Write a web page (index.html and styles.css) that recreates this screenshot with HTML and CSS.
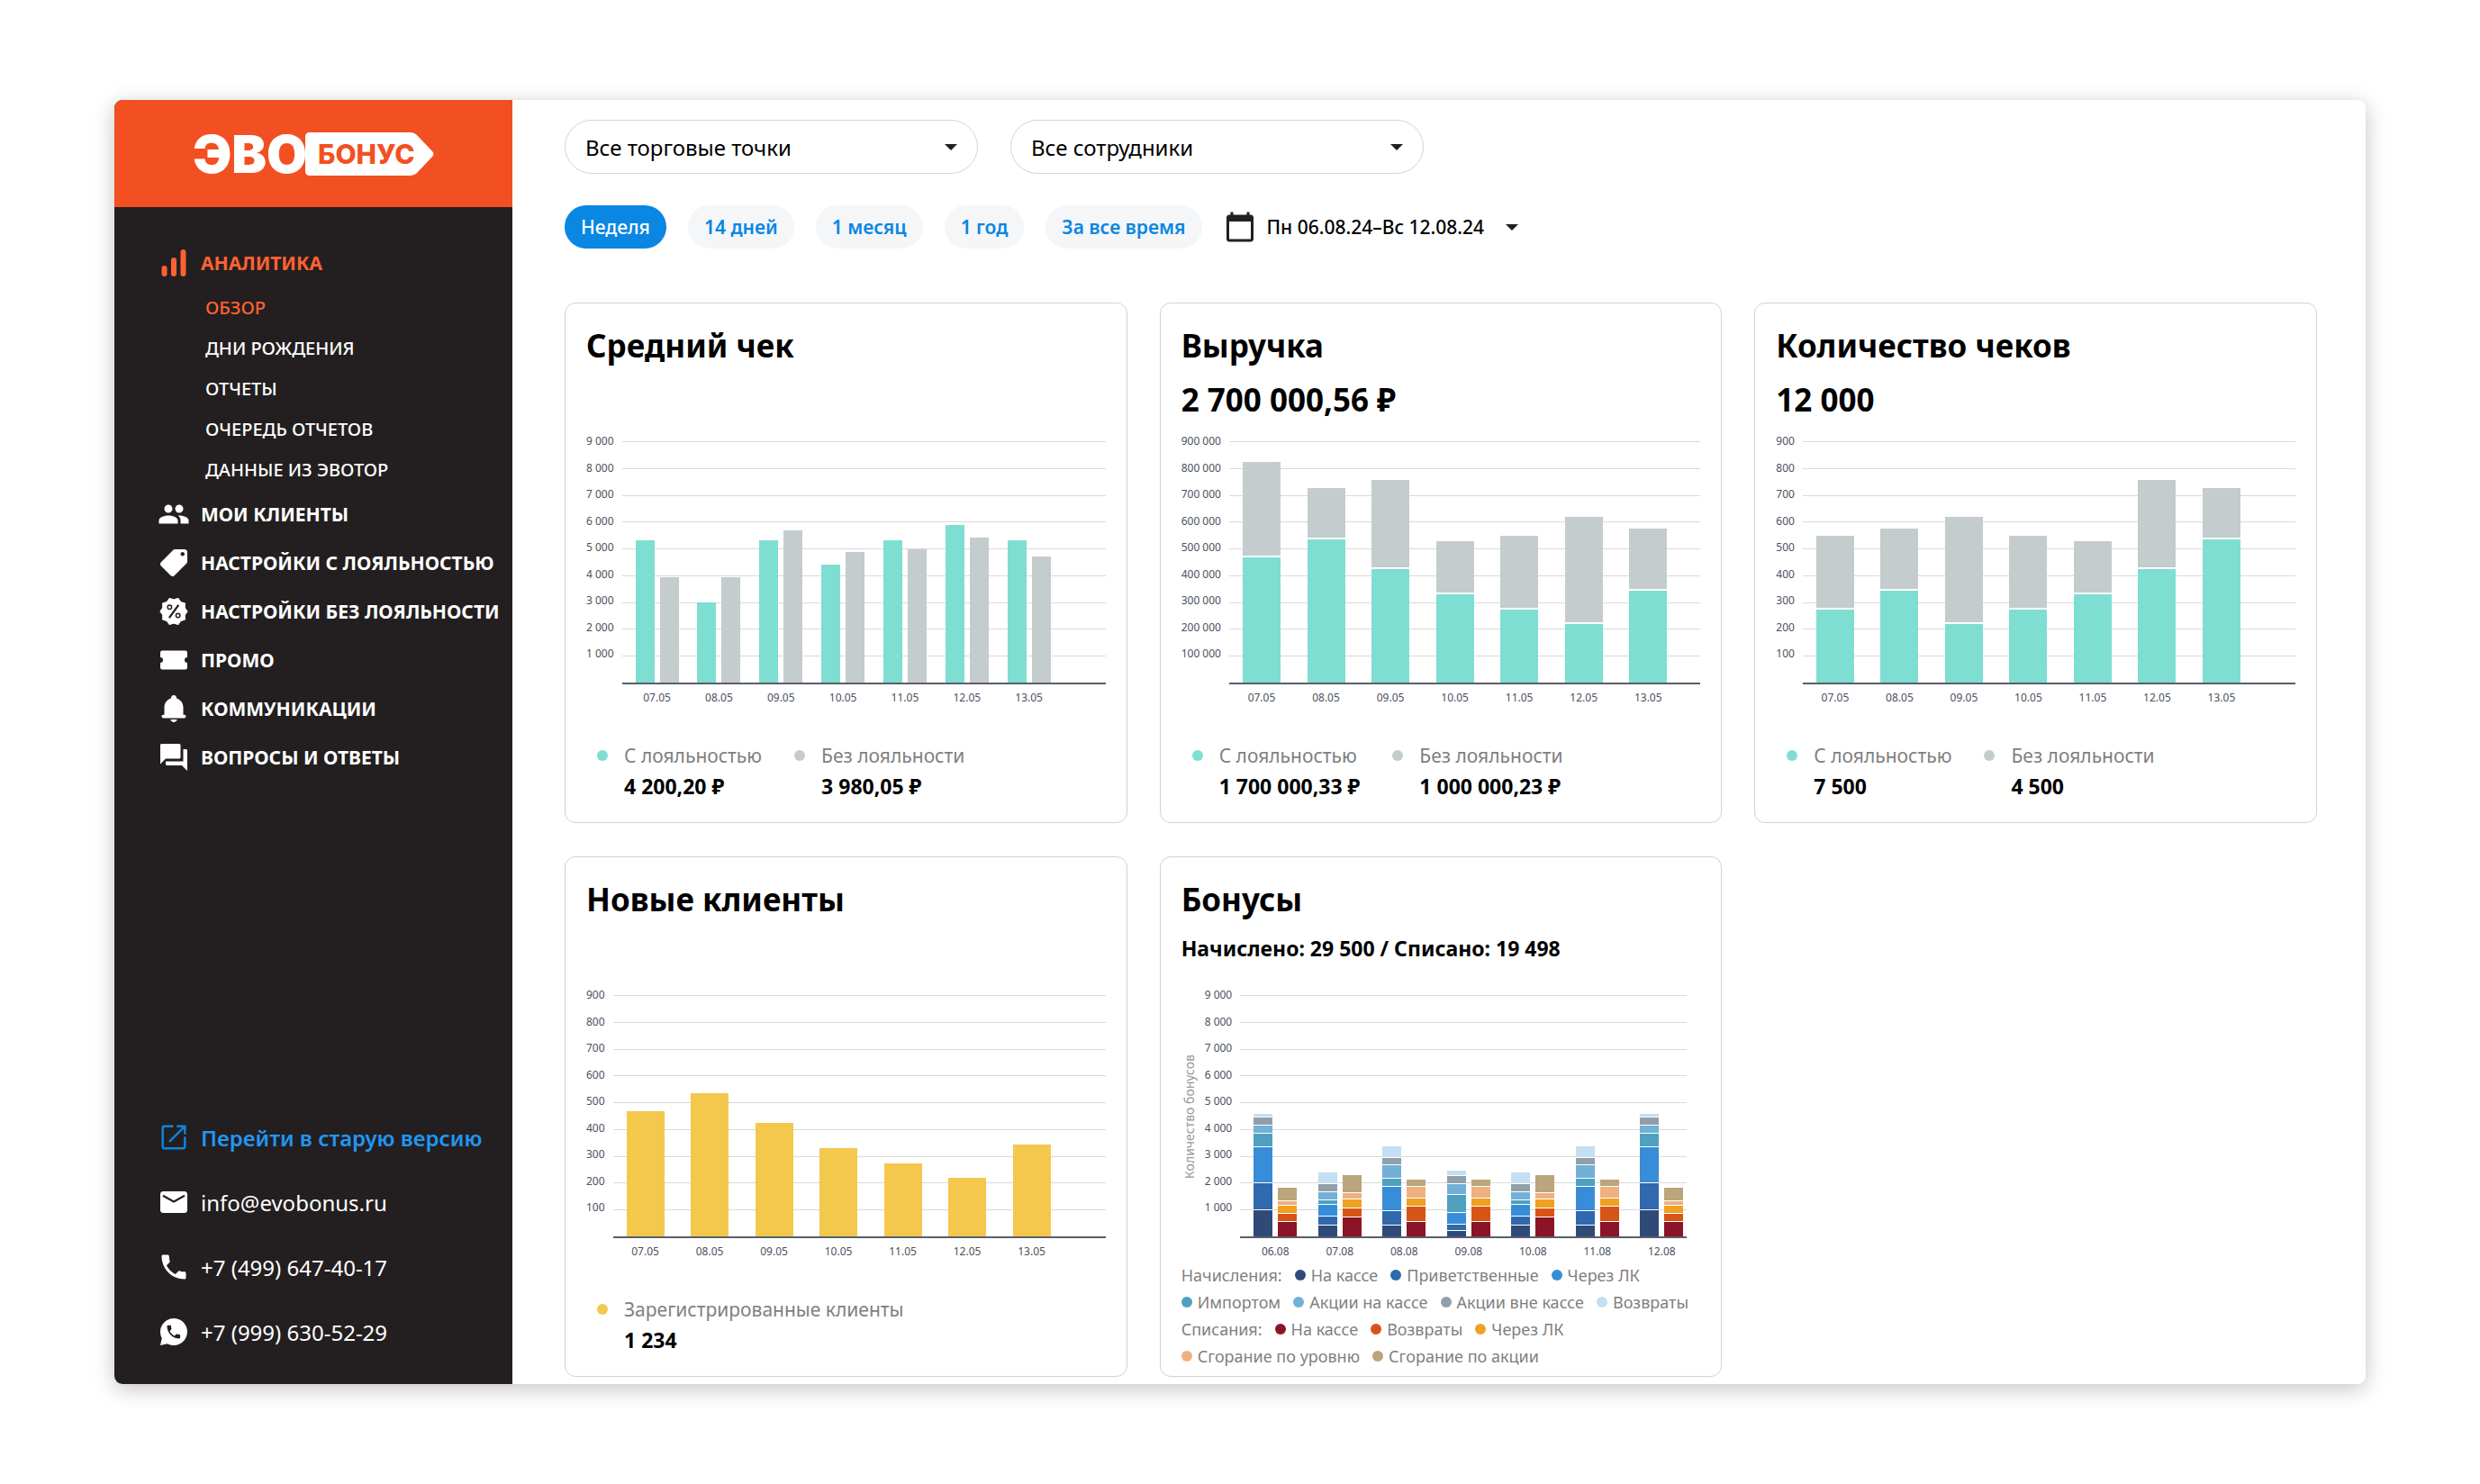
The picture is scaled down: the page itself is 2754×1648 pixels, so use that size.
FILE: index.html
```html
<!DOCTYPE html>
<html lang="ru">
<head>
  <meta charset="UTF-8">
  <title>ЭвоБонус — Аналитика</title>
  <link rel="stylesheet" href="styles.css">
</head>
<body>
  <div class="app">

    <!-- Sidebar -->
    <aside class="sidebar">
      <a class="logo" href="#" aria-label="ЭвоБонус">
        <svg width="268" height="78" viewBox="0 -12 268 78">
          <text class="logo-evo" x="0" y="48">ЭВО</text>
          <path fill="#fff" d="M130 3h112q4 0 7 3l17 18q3 3 0 6l-17 18q-3 3-7 3H130q-5 0-5-5V8q0-5 5-5z"/>
          <text class="logo-bonus" x="139" y="38">БОНУС</text>
        </svg>
      </a>

      <nav class="menu">
        <a class="menu-item active" href="#">
          <svg class="icon" viewBox="0 0 24 24"><rect x="3" y="14" width="4" height="8" rx="2"/><rect x="10" y="8" width="4" height="14" rx="2"/><rect x="17" y="2" width="4" height="20" rx="2"/></svg>
          АНАЛИТИКА
        </a>
        <div class="submenu">
          <a class="active" href="#">ОБЗОР</a>
          <a href="#">ДНИ РОЖДЕНИЯ</a>
          <a href="#">ОТЧЕТЫ</a>
          <a href="#">ОЧЕРЕДЬ ОТЧЕТОВ</a>
          <a href="#">ДАННЫЕ ИЗ ЭВОТОР</a>
        </div>
        <a class="menu-item" href="#">
          <svg class="icon" viewBox="0 0 24 24"><path d="M16 11c1.66 0 2.99-1.34 2.99-3S17.66 5 16 5c-1.66 0-3 1.34-3 3s1.34 3 3 3zm-8 0c1.66 0 2.99-1.34 2.99-3S9.66 5 8 5C6.34 5 5 6.34 5 8s1.34 3 3 3zm0 2c-2.33 0-7 1.17-7 3.5V19h14v-2.5c0-2.33-4.67-3.5-7-3.5zm8 0c-.29 0-.62.02-.97.05 1.16.84 1.97 1.97 1.97 3.45V19h6v-2.5c0-2.33-4.67-3.5-7-3.5z"/></svg>
          МОИ КЛИЕНТЫ
        </a>
        <a class="menu-item" href="#">
          <svg class="icon" viewBox="0 0 24 24"><path transform="translate(24 0) scale(-1 1)" d="M21.41 11.58l-9-9C12.05 2.22 11.55 2 11 2H4c-1.1 0-2 .9-2 2v7c0 .55.22 1.05.59 1.42l9 9c.36.36.86.58 1.41.58.55 0 1.05-.22 1.41-.59l7-7c.37-.36.59-.86.59-1.41 0-.55-.23-1.06-.59-1.42zM5.5 7C4.67 7 4 6.33 4 5.5S4.67 4 5.5 4 7 4.67 7 5.5 6.33 7 5.5 7z"/></svg>
          НАСТРОЙКИ С ЛОЯЛЬНОСТЬЮ
        </a>
        <a class="menu-item" href="#">
          <svg class="icon" viewBox="0 0 24 24">
            <path stroke="currentColor" stroke-width=".8" stroke-linejoin="round" d="M22 12l-1.9 2.66.1 3.3-3.14 1L15.15 21.6 12 20.6l-3.15 1-1.91-2.64-3.14-1 .1-3.3L2 12l1.9-2.66-.1-3.3 3.14-1L8.85 2.4l3.15 1 3.15-1 1.91 2.64 3.14 1-.1 3.3z"/>
            <path class="cut-line" stroke-width="1.5" d="M8.6 16.8l6.9-9.6"/>
            <circle class="cut-line" cx="8.9" cy="8.9" r="1.5"/>
            <circle class="cut-line" cx="15.1" cy="15" r="1.5"/>
          </svg>
          НАСТРОЙКИ БЕЗ ЛОЯЛЬНОСТИ
        </a>
        <a class="menu-item" href="#">
          <svg class="icon" viewBox="0 0 24 24"><path d="M3.5 5h17A1.5 1.5 0 0 1 22 6.5V10a2 2 0 0 0 0 4v3.5a1.5 1.5 0 0 1-1.5 1.5h-17A1.5 1.5 0 0 1 2 17.5V14a2 2 0 0 0 0-4V6.5A1.5 1.5 0 0 1 3.5 5z"/></svg>
          ПРОМО
        </a>
        <a class="menu-item" href="#">
          <svg class="icon" viewBox="0 0 24 24"><path d="M12 2c-1.1 0-2 .8-2 1.8v.5C7.1 5.1 5 7.7 5 11v5.5h-.8c-.7 0-1.2.5-1.2 1.2s.5 1.3 1.2 1.3h15.6c.7 0 1.2-.6 1.2-1.3s-.5-1.2-1.2-1.2H19V11c0-3.3-2.1-5.9-5-6.7v-.5C14 2.8 13.1 2 12 2zm-2.5 18c.3 1.1 1.3 2 2.5 2s2.2-.9 2.5-2z"/></svg>
          КОММУНИКАЦИИ
        </a>
        <a class="menu-item" href="#">
          <svg class="icon" viewBox="0 0 24 24"><path d="M21 6h-2v9H6v2c0 .55.45 1 1 1h11l4 4V7c0-.55-.45-1-1-1zm-4 6V3c0-.55-.45-1-1-1H3c-.55 0-1 .45-1 1v14l4-4h10c.55 0 1-.45 1-1z"/></svg>
          ВОПРОСЫ И ОТВЕТЫ
        </a>
      </nav>

      <div class="contacts">
        <a class="old-version" href="#">
          <svg class="icon" viewBox="0 0 24 24"><path fill="none" stroke="#0a86e3" stroke-width="1.6" d="M11.6 3.8H5A1.2 1.2 0 0 0 3.8 5v14A1.2 1.2 0 0 0 5 20.2h14a1.2 1.2 0 0 0 1.2-1.2v-7.4M14.2 3.8h6v6M20 4L8.7 15.3"/></svg>
          Перейти в старую версию
        </a>
        <a href="mailto:info@evobonus.ru">
          <svg class="icon" viewBox="0 0 24 24"><path d="M20 4H4c-1.1 0-1.99.9-1.99 2L2 18c0 1.1.9 2 2 2h16c1.1 0 2-.9 2-2V6c0-1.1-.9-2-2-2z"/><path class="cut-line" stroke-width="1.5" d="M4 7.2l8 4.4 8-4.4"/></svg>
          info@evobonus.ru
        </a>
        <a href="tel:+74996474017">
          <svg class="icon" viewBox="0 0 24 24"><path d="M6.62 10.79c1.44 2.83 3.76 5.14 6.59 6.59l2.2-2.2c.27-.27.67-.36 1.02-.24 1.12.37 2.33.57 3.57.57.55 0 1 .45 1 1V20c0 .55-.45 1-1 1-9.39 0-17-7.61-17-17 0-.55.45-1 1-1h3.5c.55 0 1 .45 1 1 0 1.25.2 2.45.57 3.57.11.35.03.74-.25 1.02l-2.2 2.2z"/></svg>
          +7 (499) 647-40-17
        </a>
        <a href="https://wa.me/79996305229">
          <svg class="icon" viewBox="0 0 24 24"><path d="M12 2a10 10 0 1 1-4.8 18.8L2 22l1.2-5.2A10 10 0 0 1 12 2z"/><path class="cut" transform="translate(5.4 5.6) scale(.54)" d="M6.62 10.79c1.44 2.83 3.76 5.14 6.59 6.59l2.2-2.2c.27-.27.67-.36 1.02-.24 1.12.37 2.33.57 3.57.57.55 0 1 .45 1 1V20c0 .55-.45 1-1 1-9.39 0-17-7.61-17-17 0-.55.45-1 1-1h3.5c.55 0 1 .45 1 1 0 1.25.2 2.45.57 3.57.11.35.03.74-.25 1.02l-2.2 2.2z"/></svg>
          +7 (999) 630-52-29
        </a>
      </div>
    </aside>

    <!-- Content -->
    <main class="content">
      <div class="filters">
        <div class="dropdown">
          <select aria-label="Торговые точки">
            <option>Все торговые точки</option>
          </select>
          <span class="caret"></span>
        </div>
        <div class="dropdown">
          <select aria-label="Сотрудники">
            <option>Все сотрудники</option>
          </select>
          <span class="caret"></span>
        </div>
      </div>

      <div class="periods">
        <button class="pill active" type="button">Неделя</button>
        <button class="pill" type="button">14 дней</button>
        <button class="pill" type="button">1 месяц</button>
        <button class="pill" type="button">1 год</button>
        <button class="pill" type="button">За все время</button>
        <button class="date-range" type="button">
          <svg class="icon" viewBox="0 0 24 24"><path d="M20 3h-1V1h-2v2H7V1H5v2H4c-1.1 0-2 .9-2 2v16c0 1.1.9 2 2 2h16c1.1 0 2-.9 2-2V5c0-1.1-.9-2-2-2zm0 18H4V8h16v13z"/></svg>
          Пн 06.08.24–Вс 12.08.24
          <span class="caret"></span>
        </button>
      </div>

      <div class="cards">
        <section class="card">
          <header class="card-head">
            <h2>Средний чек</h2>
          </header>
          <div class="chart" id="chartAverage"></div>
          <div class="legend">
            <div class="legend-item"><i class="dot teal"></i><span>С лояльностью</span><b>4 200,20 ₽</b></div>
            <div class="legend-item"><i class="dot gray"></i><span>Без лояльности</span><b>3 980,05 ₽</b></div>
          </div>
        </section>

        <section class="card">
          <header class="card-head">
            <h2>Выручка</h2>
            <p class="total">2 700 000,56 ₽</p>
          </header>
          <div class="chart chart-wide" id="chartRevenue"></div>
          <div class="legend">
            <div class="legend-item"><i class="dot teal"></i><span>С лояльностью</span><b>1 700 000,33 ₽</b></div>
            <div class="legend-item"><i class="dot gray"></i><span>Без лояльности</span><b>1 000 000,23 ₽</b></div>
          </div>
        </section>

        <section class="card">
          <header class="card-head">
            <h2>Количество чеков</h2>
            <p class="total">12 000</p>
          </header>
          <div class="chart" id="chartReceipts"></div>
          <div class="legend">
            <div class="legend-item"><i class="dot teal"></i><span>С лояльностью</span><b>7 500</b></div>
            <div class="legend-item"><i class="dot gray"></i><span>Без лояльности</span><b>4 500</b></div>
          </div>
        </section>

        <section class="card">
          <header class="card-head">
            <h2>Новые клиенты</h2>
          </header>
          <div class="chart" id="chartClients"></div>
          <div class="legend">
            <div class="legend-item"><i class="dot yellow"></i><span>Зарегистрированные клиенты</span><b>1 234</b></div>
          </div>
        </section>

        <section class="card">
          <header class="card-head">
            <h2>Бонусы</h2>
            <p class="total total-small">Начислено: 29 500 / Списано: 19 498</p>
          </header>
          <div class="chart chart-bonus" id="chartBonus"></div>
          <div class="bonus-legend">
            <span>Начисления:</span>
            <span><i class="dot c1"></i>На кассе</span>
            <span><i class="dot c2"></i>Приветственные</span>
            <span><i class="dot c3"></i>Через ЛК</span>
            <span><i class="dot c4"></i>Импортом</span>
            <span><i class="dot c5"></i>Акции на кассе</span>
            <span><i class="dot c6"></i>Акции вне кассе</span>
            <span><i class="dot c7"></i>Возвраты</span>
          </div>
          <div class="bonus-legend">
            <span>Списания:</span>
            <span><i class="dot d1"></i>На кассе</span>
            <span><i class="dot d2"></i>Возвраты</span>
            <span><i class="dot d3"></i>Через ЛК</span>
            <span><i class="dot d4"></i>Сгорание по уровню</span>
            <span><i class="dot d5"></i>Сгорание по акции</span>
          </div>
        </section>
      </div>
    </main>
  </div>

  <script src="charts.js"></script>
</body>
</html>
```
FILE: styles.css
```css
* {
  box-sizing: border-box;
}

body {
  margin: 0;
  padding: 111px 127px;
  background: #fff;
  color: #000;
  font-family: "Noto Sans", "Open Sans", sans-serif;
  font-size: 24px;
}

a {
  color: inherit;
  text-decoration: none;
}

button, select {
  font: inherit;
  color: inherit;
  cursor: pointer;
}

h2, p {
  margin: 0;
}

.app {
  display: flex;
  background: #fff;
  border-radius: 9px;
  overflow: hidden;
  box-shadow: 0 5px 24px rgba(0, 0, 0, 0.24);
}

.icon {
  width: 36px;
  height: 36px;
  flex: none;
  fill: currentColor;
}

/* Sidebar */
.sidebar {
  width: 442px;
  flex: none;
  display: flex;
  flex-direction: column;
  background: #231f20;
  color: #fff;
  white-space: nowrap;
}

.logo {
  height: 119px;
  display: flex;
  align-items: center;
  justify-content: center;
  background: #f25022;
}

.logo-evo,
.logo-bonus {
  font-family: Inter, sans-serif;
  font-weight: 900;
  font-size: 58px;
  fill: #fff;
}

.logo-bonus {
  font-weight: 800;
  font-size: 30px;
  fill: #f25022;
}

.menu {
  flex: 1;
  padding-top: 35px;
}

.menu-item {
  display: flex;
  align-items: center;
  gap: 12px;
  height: 54px;
  padding-left: 48px;
  font-size: 21px;
  font-weight: 700;
}

.submenu a {
  display: block;
  padding-left: 101px;
  font-size: 20px;
  font-weight: 500;
  line-height: 45px;
}

.menu .active {
  color: #ff6232;
}

.cut {
  fill: #231f20;
}

.cut-line {
  fill: none;
  stroke: #231f20;
}

.contacts {
  padding: 0 0 22px 48px;
}

.contacts a {
  display: flex;
  align-items: center;
  gap: 12px;
  height: 72px;
}

.contacts .old-version {
  color: #2196f3;
  font-weight: 600;
}

/* Filters */
.content {
  flex: 1;
  min-width: 0;
  padding: 22px 54px 8px 58px;
}

.filters {
  display: flex;
  gap: 36px;
}

.dropdown {
  display: grid;
  align-items: center;
  width: 459px;
}

.dropdown select {
  grid-area: 1 / 1;
  height: 60px;
  padding: 0 60px 0 22px;
  appearance: none;
  background: #fff;
  border: 1px solid #d0d2d2;
  border-radius: 30px;
}

.caret {
  border: 7px solid transparent;
  border-top-color: #231f20;
  border-bottom: 0;
}

.dropdown .caret {
  grid-area: 1 / 1;
  justify-self: end;
  margin-right: 23px;
  pointer-events: none;
}

.periods {
  display: flex;
  align-items: center;
  gap: 24px;
  margin: 35px 0 60px;
  font-size: 21px;
  font-weight: 500;
}

.pill {
  height: 48px;
  padding: 0 18px;
  border: 0;
  border-radius: 24px;
  background: #f4f6f8;
  color: #0a86e3;
  font-weight: 600;
}

.pill.active {
  background: #0a86e3;
  color: #fff;
  font-weight: 500;
}

.date-range {
  display: flex;
  align-items: center;
  gap: 12px;
  padding: 0;
  border: 0;
  background: none;
}

.date-range .caret {
  margin-left: 12px;
}

.date-range .icon {
  fill: #231f20;
}

/* Cards */
.cards {
  display: grid;
  grid-template-columns: repeat(3, 1fr);
  gap: 37px 36px;
}

.card {
  min-height: 578px;
  padding: 23px 23px 6px;
  border: 1px solid #d0d2d2;
  border-radius: 12px;
}

.card-head {
  min-height: 108px;
  margin-bottom: 22px;
}

.card h2,
.total {
  font-size: 35px;
  font-weight: 700;
  line-height: 48px;
}

.total {
  margin-top: 12px;
}

.card .total-small {
  font-size: 23px;
  line-height: 36px;
}

/* Charts */
.chart {
  --pad-right: 61px;
  display: grid;
  grid-template-columns: auto 1fr;
  column-gap: 9px;
  color: #4b5060;
  font-size: 12px;
  line-height: 14px;
}

.chart-wide {
  --pad-right: 37px;
}

.chart-bonus {
  --pad-right: 4px;
  grid-template-columns: 17px auto 1fr;
  padding-right: 15px;
}

.axis-title {
  align-self: center;
  writing-mode: vertical-rl;
  transform: rotate(180deg);
  color: #999;
  font-size: 14px;
  line-height: 17px;
}

.scale {
  display: flex;
  flex-direction: column;
  justify-content: space-between;
  height: 250px;
  margin-top: -7px;
  text-align: right;
}

.plot {
  display: grid;
  height: 270px;
  border-bottom: 2px solid #5a5e6b;
}

.lines {
  grid-area: 1 / 1;
  display: grid;
  grid-template-rows: repeat(9, 1fr);
}

.lines i {
  border-top: 1px solid #dadada;
}

.bars,
.dates {
  display: flex;
  justify-content: space-between;
  padding: 0 var(--pad-right) 0 15px;
}

.bars {
  grid-area: 1 / 1;
  z-index: 1;
}

.dates {
  grid-column: -2;
  margin-top: 8px;
  text-align: center;
}

.dates span {
  width: 42px;
}

.day {
  display: flex;
  align-items: flex-end;
  gap: 6px;
}

.bar {
  width: 42px;
  height: 100%;
  display: flex;
  flex-direction: column-reverse;
}

.bar i + i {
  border-bottom: 2px solid #fff;
}

.paired .bar {
  width: 21px;
}

.paired.dates span {
  width: 48px;
}

.chart-bonus .bar i + i {
  border-bottom-width: 1px;
}

.teal { background: #7eded2; }
.gray { background: #c4cccd; }
.yellow { background: #f3c84d; }
.c1 { background: #304a78; }
.c2 { background: #3069ad; }
.c3 { background: #388dd8; }
.c4 { background: #50a0bf; }
.c5 { background: #72b0d8; }
.c6 { background: #919fa9; }
.c7 { background: #c3dff1; }
.d1 { background: #8c1428; }
.d2 { background: #d75514; }
.d3 { background: #f0a022; }
.d4 { background: #f0b080; }
.d5 { background: #bca47d; }

/* Legends */
.dot {
  width: 12px;
  height: 12px;
  flex: none;
  border-radius: 50%;
}

.legend {
  display: flex;
  gap: 36px;
  margin-top: 40px;
  padding-left: 12px;
}

.legend-item {
  display: grid;
  grid-template-columns: 12px auto;
  align-items: center;
  column-gap: 18px;
}

.legend-item span {
  color: #7f7f7f;
  font-size: 21px;
  line-height: 34px;
}

.legend-item b {
  grid-column: 2;
  font-size: 23px;
  line-height: 34px;
}

.bonus-legend {
  display: flex;
  flex-wrap: wrap;
  column-gap: 14px;
  color: #7f7f7f;
  font-size: 18px;
  line-height: 30px;
}

.chart-bonus + .bonus-legend {
  margin-top: 4px;
}

.bonus-legend span {
  display: flex;
  align-items: center;
  gap: 6px;
}
```
FILE: charts.js
```js
const week = ["07.05", "08.05", "09.05", "10.05", "11.05", "12.05", "13.05"];

// each day is a list of bars, each bar is a list of stacked values
const revenue = [
  [[468, 355]], [[535, 191]], [[423, 334]], [[329, 199]],
  [[273, 275]], [[218, 400]], [[343, 230]]
];

const bonusDays = {
  a: [[990, 1000, 1340, 490, 310, 300, 130], [550, 300, 300, 160, 510]],
  b: [[390, 360, 440, 160, 290, 300, 430], [690, 350, 350, 210, 680]],
  c: [[390, 560, 890, 310, 490, 300, 420], [550, 550, 300, 450, 270]],
  d: [[200, 240, 450, 670, 380, 310, 210], [550, 550, 300, 450, 270]]
};

function format(n) {
  return String(n).replace(/\B(?=(\d{3})+$)/g, " ");
}

function drawChart(id, { step, days, dates = week, colors, unit = 1, title }) {
  const max = step * 9;
  const paired = days[0].length > 1 ? " paired" : "";

  let scale = "";
  for (let i = 9; i > 0; i--) scale += `<span>${format(step * i)}</span>`;

  const bars = days.map(day => `<div class="day">` + day.map((values, b) =>
    `<div class="bar">` + values.map((v, i) =>
      `<i class="${colors[b][i]}" style="height: ${(v * unit / max * 100).toFixed(2)}%"></i>`
    ).join("") + `</div>`
  ).join("") + `</div>`).join("");

  document.getElementById(id).innerHTML =
    (title ? `<span class="axis-title">${title}</span>` : "") +
    `<div class="scale">${scale}</div>` +
    `<div class="plot${paired}"><div class="lines">${"<i></i>".repeat(9)}</div><div class="bars">${bars}</div></div>` +
    `<div class="dates${paired}">${dates.map(d => `<span>${d}</span>`).join("")}</div>`;
}

drawChart("chartAverage", {
  step: 1000,
  colors: [["teal"], ["gray"]],
  days: [
    [[5320], [3915]], [[2980], [3915]], [[5320], [5690]], [[4415], [4885]],
    [[5320], [4985]], [[5870], [5420]], [[5320], [4715]]
  ]
});

drawChart("chartRevenue", {
  step: 100000,
  unit: 1000,
  colors: [["teal", "gray"]],
  days: revenue
});

drawChart("chartReceipts", {
  step: 100,
  colors: [["teal", "gray"]],
  days: [4, 6, 5, 4, 3, 2, 1].map(i => revenue[i])
});

drawChart("chartClients", {
  step: 100,
  colors: [["yellow"]],
  days: revenue.map(day => [[day[0][0]]])
});

drawChart("chartBonus", {
  step: 1000,
  title: "Количество бонусов",
  dates: ["06.08", "07.08", "08.08", "09.08", "10.08", "11.08", "12.08"],
  colors: [["c1", "c2", "c3", "c4", "c5", "c6", "c7"], ["d1", "d2", "d3", "d4", "d5"]],
  days: ["a", "b", "c", "d", "b", "c", "a"].map(k => bonusDays[k])
});
```
